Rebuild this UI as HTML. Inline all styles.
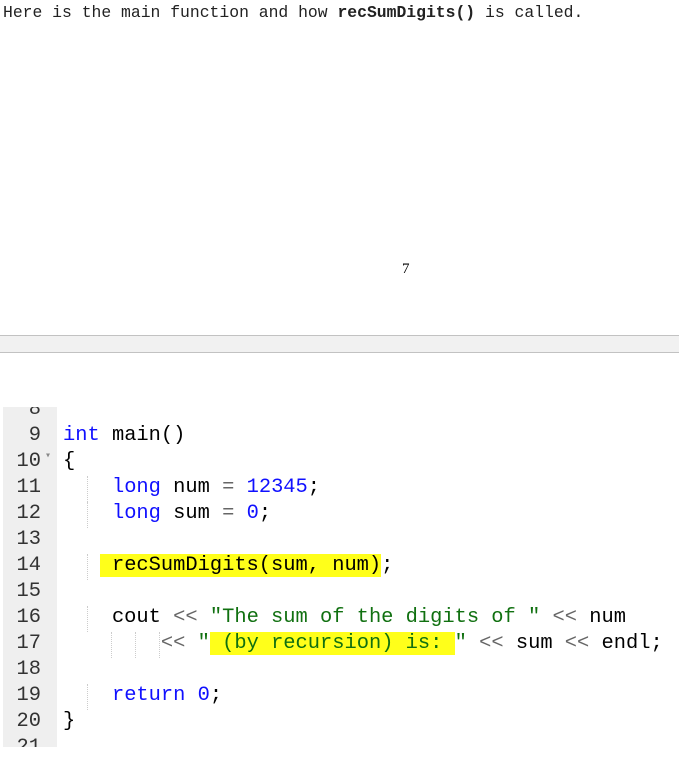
<!DOCTYPE html>
<html><head><meta charset="utf-8"><style>
body{margin:0;width:679px;height:763px;background:#fff;position:relative;overflow:hidden}
.top{position:absolute;left:3px;top:2px;font:16.4px "Liberation Mono",monospace;color:#222;white-space:pre;line-height:22px}
.top b{font-family:"Liberation Mono",monospace}
.seven{position:absolute;left:402px;top:261px;font:15px "Liberation Serif",serif;color:#000}
.bar{position:absolute;left:0;top:335px;width:679px;height:16px;background:#f1f1f1;border-top:1px solid #c2c2c2;border-bottom:1px solid #c2c2c2}
.code{position:absolute;left:3px;top:407px;width:676px;height:340px;overflow:hidden}
.gut{position:absolute;left:0;top:0;width:54px;height:340px;background:#efefef}
.l{position:absolute;left:0;height:26px;line-height:26px;font:20.4px "Liberation Mono",monospace;white-space:pre;color:#000}
.n{position:absolute;left:0;width:38px;text-align:right;color:#333}
.t{position:absolute;left:60px}
.k{color:#1010ff}.s{color:#107010}.o{color:#666}
.h{background:#ffff1a}
.g{position:absolute;border-left:1px dotted #ccc;height:26px;top:0}
.arr{position:absolute;left:42px;top:0;font-size:10px;color:#888}
</style></head><body>
<div class="top">Here is the main function and how <b>recSumDigits()</b> is called.</div>
<div class="seven">7</div>
<div class="bar"></div>
<div class="code">
<div class="gut"></div>
<div class="l" style="top:-9px"><span class="n">8</span></div>
<div class="l" style="top:17px"><span class="n">9</span><span class="t"><span class="k">int</span> main()</span></div>
<div class="l" style="top:43px"><span class="n">10</span><span class="arr">▾</span><span class="t">{</span></div>
<div class="l" style="top:69px"><span class="n">11</span><span class="g" style="left:84px"></span><span class="t">    <span class="k">long</span> num <span class="o">=</span> <span class="k">12345</span>;</span></div>
<div class="l" style="top:95px"><span class="n">12</span><span class="g" style="left:84px"></span><span class="t">    <span class="k">long</span> sum <span class="o">=</span> <span class="k">0</span>;</span></div>
<div class="l" style="top:121px"><span class="n">13</span></div>
<div class="l" style="top:147px"><span class="n">14</span><span class="g" style="left:84px"></span><span class="t">   <span class="h"> recSumDigits(sum, num)</span>;</span></div>
<div class="l" style="top:173px"><span class="n">15</span></div>
<div class="l" style="top:199px"><span class="n">16</span><span class="g" style="left:84px"></span><span class="t">    cout <span class="o">&lt;&lt;</span> <span class="s">"The sum of the digits of "</span> <span class="o">&lt;&lt;</span> num</span></div>
<div class="l" style="top:225px"><span class="n">17</span><span class="g" style="left:108px"></span><span class="g" style="left:132px"></span><span class="g" style="left:156px"></span><span class="t">        <span class="o">&lt;&lt;</span> <span class="s">"<span class="h"> (by recursion) is: </span>"</span> <span class="o">&lt;&lt;</span> sum <span class="o">&lt;&lt;</span> endl;</span></div>
<div class="l" style="top:251px"><span class="n">18</span></div>
<div class="l" style="top:277px"><span class="n">19</span><span class="g" style="left:84px"></span><span class="t">    <span class="k">return</span> <span class="k">0</span>;</span></div>
<div class="l" style="top:303px"><span class="n">20</span><span class="t">}</span></div>
<div class="l" style="top:329px"><span class="n">21</span></div>
</div>
</body></html>
